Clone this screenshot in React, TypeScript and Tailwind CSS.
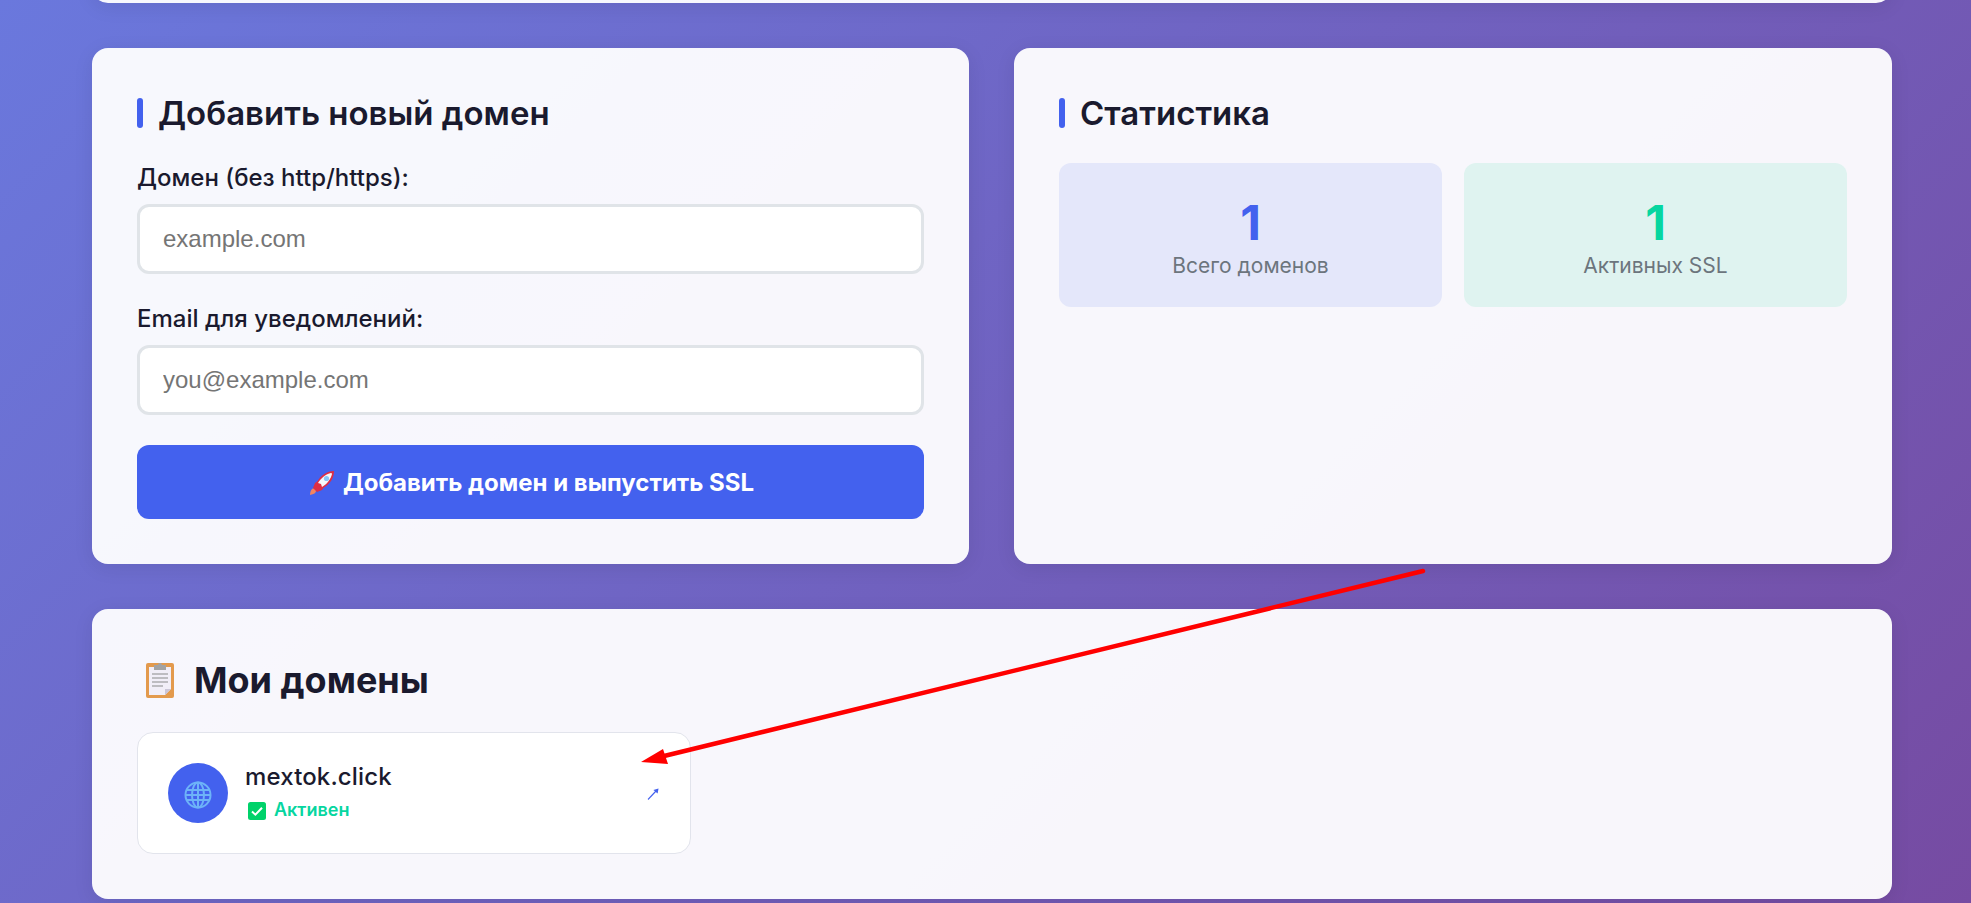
const sans = { fontFamily: 'Inter, "Noto Sans", sans-serif' }

function SectionTitle({ children }: { children: string }) {
  return (
    <div className="flex items-center gap-[15px] h-[30px]">
      <span className="w-[6px] h-[30px] rounded-[3px] bg-[#4361ee]" />
      <h2 className="text-[33px] leading-[30px] font-semibold text-[#1a1a2e]">{children}</h2>
    </div>
  )
}

function Field({ label, placeholder, type }: { label: string; placeholder: string; type: string }) {
  return (
    <div>
      <label className="block text-[24px] leading-[29px] font-medium text-[#1a1a2e] mb-[12px]">{label}</label>
      <input
        type={type}
        placeholder={placeholder}
        className="block w-full h-[70px] px-[23px] rounded-[12px] border-[3px] border-[#e0e4e8] bg-white text-[24px] outline-none placeholder:text-[#757575] font-['Liberation_Sans',Arial,sans-serif]"
      />
    </div>
  )
}

function Stat({ value, label, tone, color }: { value: number; label: string; tone: string; color: string }) {
  return (
    <div className={`h-[144px] rounded-[12px] flex flex-col items-center pt-[31px] ${tone}`}>
      <div className={`text-[48px] leading-[58px] font-bold ${color}`}>{value}</div>
      <div className="text-[21px] leading-[26px] text-[#6c757d] mt-[1px]">{label}</div>
    </div>
  )
}

function RocketIcon() {
  return (
    <svg width="26" height="26" viewBox="0 0 26 26" className="shrink-0">
      <path d="M3 19c2-1 4 0 4 2 0 2-2 3-6 4 0-3 1-5 2-6z" fill="#f4845f" />
      <path d="M6 13l-2 5 4 4 5-2 2-3-6-6z" fill="#dd2e44" />
      <path d="M8 12C12 5 18 1 25 1c0 7-4 13-11 17l-3-1z" fill="#dd2e44" />
      <path d="M9 13c3-5 8-9 13-10 1 0 1 1 1 1-1 5-5 10-10 13l-1-3z" fill="#f5f8fa" />
      <circle cx="17.5" cy="8.5" r="2.6" fill="#88c9f9" />
    </svg>
  )
}

function ClipboardIcon() {
  return (
    <svg width="28" height="36" viewBox="0 0 28 36" className="shrink-0">
      <rect y="1" width="28" height="35" rx="2" fill="#e39a4d" />
      <path d="M3 5h22v22l-6 6H3z" fill="#f1eef8" />
      <path d="M25 27l-6 6v-6z" fill="#cbc6d8" />
      <path d="M8 3h4a2 2 0 0 1 4 0h4v5H8z" fill="#a3a3a3" />
      <path d="M6 12h16M6 16h16M6 20h16M6 24h11" stroke="#8a8a8a" strokeWidth="1.2" />
    </svg>
  )
}

function GlobeIcon() {
  return (
    <svg width="28" height="28" viewBox="0 0 28 28" fill="none" stroke="#6db3f8" strokeWidth="2" className="mt-[4px]">
      <circle cx="14" cy="14" r="12.5" />
      <ellipse cx="14" cy="14" rx="6" ry="12.5" />
      <path d="M14 1.5v25M2.5 9h23M2.5 19h23M1.5 14h25" />
    </svg>
  )
}

function CheckIcon() {
  return (
    <svg width="18" height="18" viewBox="0 0 18 18" className="shrink-0 mt-[1px]">
      <rect width="18" height="18" rx="2.5" fill="#00d26a" />
      <path d="M4 9.5l3.4 3.2L14 5.8" fill="none" stroke="#fff" strokeWidth="2" />
    </svg>
  )
}

function OpenArrow() {
  return (
    <svg width="12" height="12" viewBox="0 0 12 12" className="shrink-0 mt-[2px] -ml-[1px] mr-[1px]">
      <path d="M1 11.5L9 3" stroke="#4361ee" strokeWidth="1.1" fill="none" />
      <path d="M11.5 0.5L10.6 5.6L6.4 2z" fill="#4361ee" />
    </svg>
  )
}

export default function App() {
  return (
    <div
      style={sans}
      className="relative h-[903px] overflow-hidden bg-[linear-gradient(135deg,#6a78dd_0%,#764ba2_100%)] pl-[92px] pr-[79px]"
    >
      <div className="h-[40px] -mt-[37px] rounded-[16px] bg-white/95 shadow-[0_4px_20px_rgba(0,0,0,0.08)]" />

      <div className="grid grid-cols-[877px_878px] gap-[45px] mt-[45px]">
        <section className="h-[516px] rounded-[16px] bg-white/95 shadow-[0_4px_20px_rgba(0,0,0,0.08)] px-[45px] pt-[50px]">
          <SectionTitle>Добавить новый домен</SectionTitle>
          <div className="mt-[35px] flex flex-col gap-[30px]">
            <Field label="Домен (без http/https):" placeholder="example.com" type="text" />
            <Field label="Email для уведомлений:" placeholder="you@example.com" type="email" />
          </div>
          <button
            type="button"
            className="mt-[30px] w-full h-[74px] pt-[2px] pl-[2px] rounded-[12px] bg-[#4361ee] text-white text-[24px] font-bold flex items-center justify-center gap-[8px]"
          >
            <RocketIcon />
            Добавить домен и выпустить SSL
          </button>
        </section>

        <section className="h-[516px] rounded-[16px] bg-white/95 shadow-[0_4px_20px_rgba(0,0,0,0.08)] px-[45px] pt-[50px]">
          <SectionTitle>Статистика</SectionTitle>
          <div className="mt-[35px] grid grid-cols-2 gap-[22px]">
            <Stat value={1} label="Всего доменов" tone="bg-[#e4e7fa]" color="text-[#4361ee]" />
            <Stat value={1} label="Активных SSL" tone="bg-[#dff3f0]" color="text-[#06d6a0]" />
          </div>
        </section>
      </div>

      <section className="mt-[45px] h-[290px] rounded-[16px] bg-white/95 shadow-[0_4px_20px_rgba(0,0,0,0.08)] px-[45px] pt-[51px]">
        <div className="flex items-center gap-[20px] h-[40px] pl-[9px]">
          <ClipboardIcon />
          <h2 className="text-[36px] leading-[40px] font-bold text-[#1a1a2e]">Мои домены</h2>
        </div>
        <div className="mt-[32px] w-[554px] h-[122px] rounded-[16px] border border-[#e2e4ec] bg-white flex items-center pl-[30px] pr-[30px]">
          <div className="w-[60px] h-[60px] rounded-full bg-[#4361ee] flex items-center justify-center">
            <GlobeIcon />
          </div>
          <div className="ml-[17px] flex-1">
            <div className="text-[24px] leading-[28px] font-medium tracking-[0.15px] text-[#1a1a2e] -mt-[2px]">mextok.click</div>
            <div className="flex items-center gap-[8px] mt-[8px] pl-[3px] text-[18px] leading-[22px] font-semibold text-[#06d6a0]">
              <CheckIcon />
              Активен
            </div>
          </div>
          <OpenArrow />
        </div>
      </section>

      <svg className="absolute inset-0 pointer-events-none" width="1971" height="903" viewBox="0 0 1971 903">
        <line x1="1423" y1="571" x2="660" y2="757" stroke="#ff0000" strokeWidth="4.5" strokeLinecap="round" />
        <path d="M641 762L663 749L668 764Z" fill="#ff0000" />
      </svg>
    </div>
  )
}
